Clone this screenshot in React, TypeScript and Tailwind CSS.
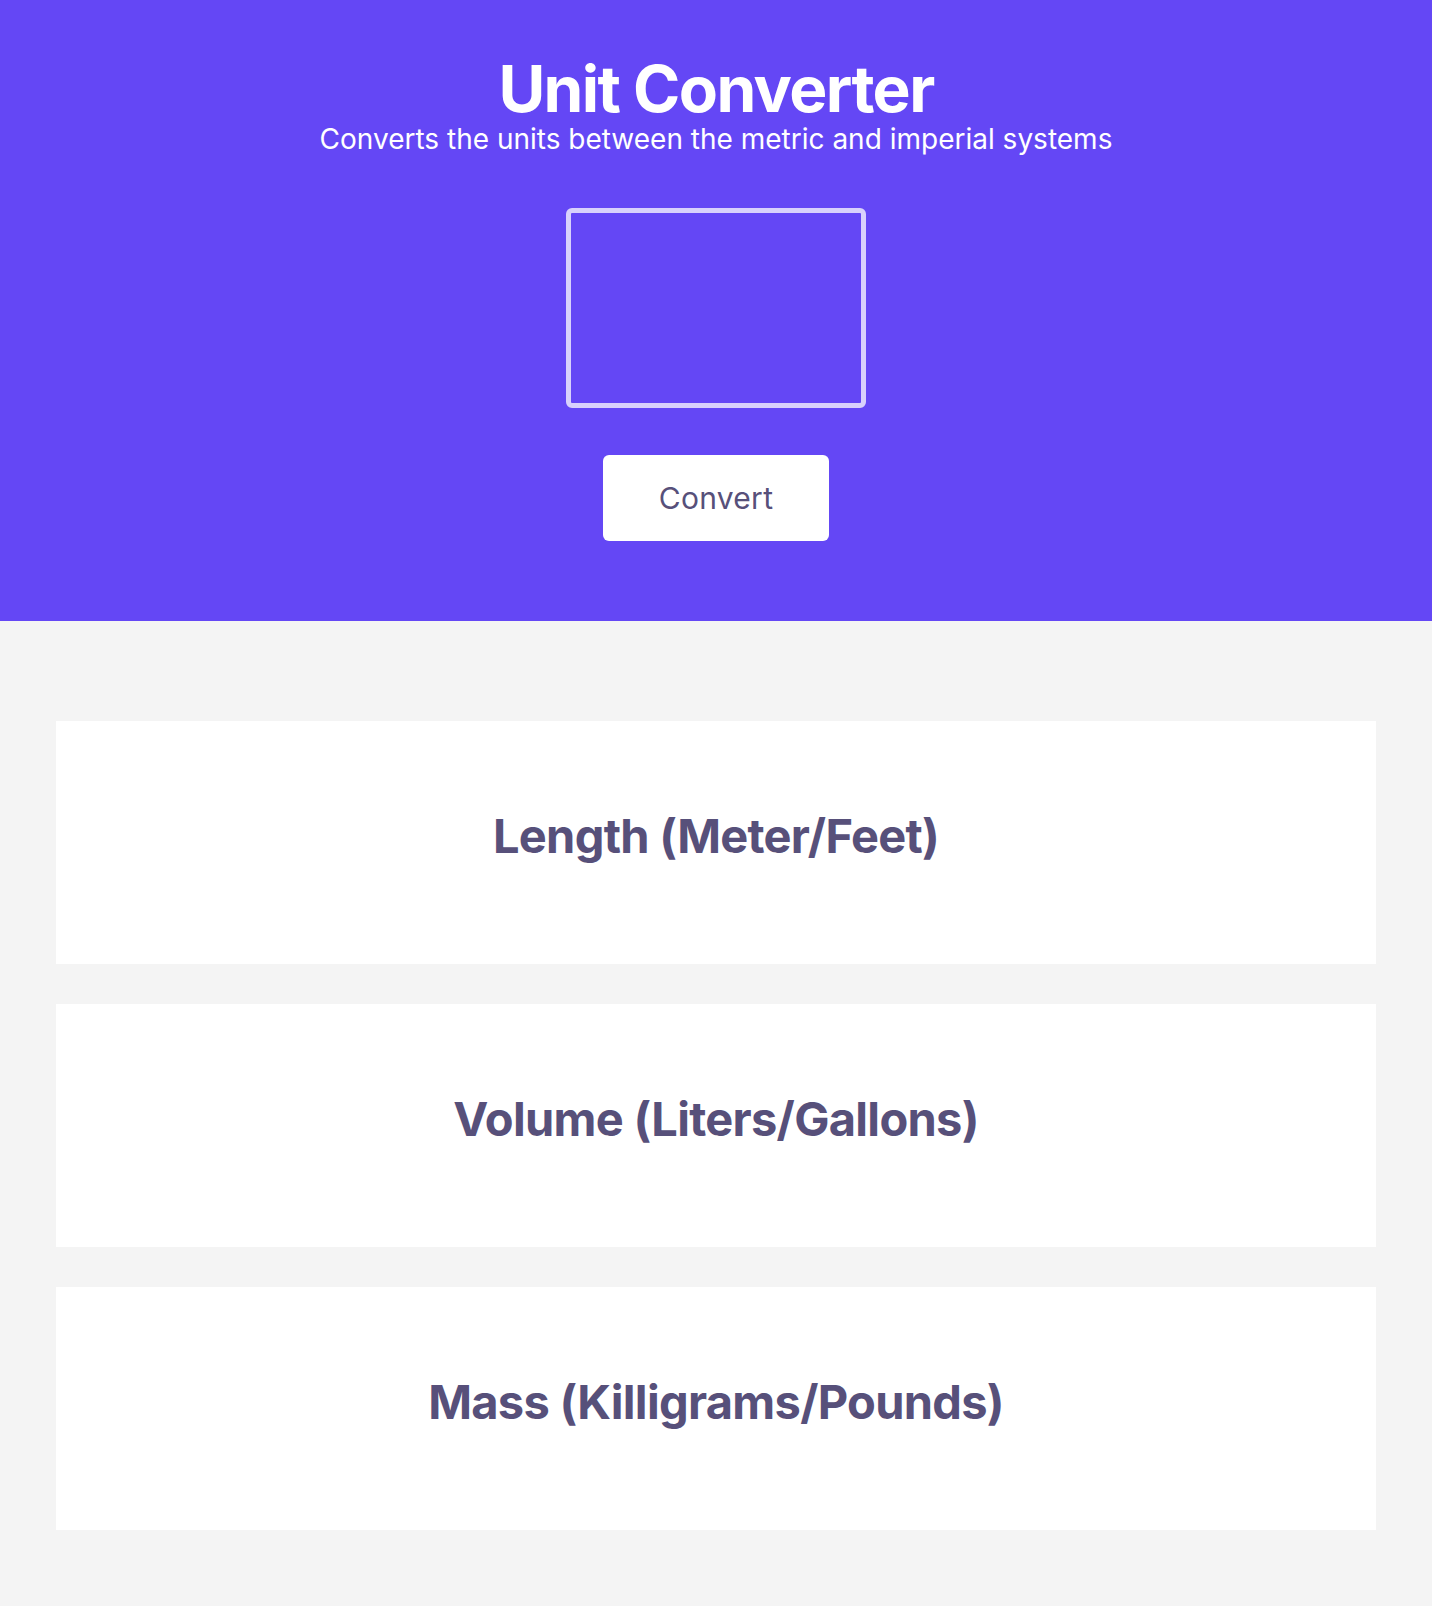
import React from "react";

export default function App() {
  const cards = ["Length (Meter/Feet)", "Volume (Liters/Gallons)", "Mass (Killigrams/Pounds)"];
  return (
    <div className="min-h-[1606px] bg-[#f4f4f4] font-['Inter','Noto_Sans',sans-serif]">
      <header className="h-[621px] bg-[#6447f5] flex flex-col items-center text-white">
        <h1 className="mt-[57px] text-[64px] leading-none font-bold tracking-[-1.6px]">Unit Converter</h1>
        <p className="mt-[4px] text-[28px] leading-none">Converts the units between the metric and imperial systems</p>
        <input
          type="text"
          className="mt-[55px] w-[300px] h-[200px] rounded-md border-[5px] border-[#d8d1fc] bg-transparent outline-none"
        />
        <button className="mt-[47px] w-[226px] h-[86px] rounded-md bg-white text-[30px] tracking-[0.3px] text-[#57507a]">
          Convert
        </button>
      </header>
      <main className="px-[56px] pt-[100px] pb-[77px] flex flex-col gap-[40px]">
        {cards.map((c) => (
          <section key={c} className="h-[243px] bg-white flex items-center justify-center pb-[14px]">
            <h2 className="text-[47px] leading-none font-bold text-[#57507a] tracking-[-0.7px]">{c}</h2>
          </section>
        ))}
      </main>
    </div>
  );
}
